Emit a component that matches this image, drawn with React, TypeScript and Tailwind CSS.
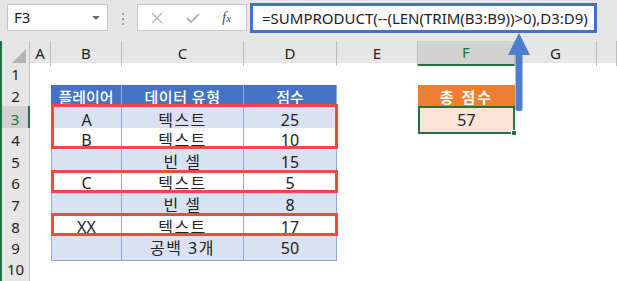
import React from "react";

const font = `"Segoe UI", "Noto Sans", "Noto Sans CJK KR", sans-serif`;

const cols = ["A", "B", "C", "D", "E", "F", "G", ""];
const rowHeights = [22, 21, 22, 22, 21, 22, 22, 21, 22, 22];

type Row = { b: string; c: string; d: string };
const data: Row[] = [
  { b: "A", c: "텍스트", d: "25" },
  { b: "B", c: "텍스트", d: "10" },
  { b: "", c: "빈 셀", d: "15" },
  { b: "C", c: "텍스트", d: "5" },
  { b: "", c: "빈 셀", d: "8" },
  { b: "XX", c: "텍스트", d: "17" },
  { b: "", c: "공백 3개", d: "50" },
];

function Toolbar() {
  return (
    <div className="flex h-[41px] items-start bg-[#e6e6e6] pt-[4px]">
      <div className="ml-[7px] flex h-[27px] w-[101px] items-center justify-between border border-[#c6c6c6] bg-white pl-[6px] pr-[7px] text-[15px] text-[#222]">
        <span>F3</span>
        <span className="h-0 w-0 border-x-[4px] border-t-[4px] border-x-transparent border-t-[#666]" />
      </div>
      <div className="ml-[14px] mt-[9px] flex flex-col gap-[3px]">
        <span className="size-[2px] bg-[#9a9a9a]" />
        <span className="size-[2px] bg-[#9a9a9a]" />
        <span className="size-[2px] bg-[#9a9a9a]" />
      </div>
      <div className="ml-[13px] flex h-[27px] w-[110px] items-center border border-[#c6c6c6] bg-white">
        <svg width="12" height="12" viewBox="0 0 12 12" className="ml-[13px]">
          <path d="M1 1 L11 11 M11 1 L1 11" stroke="#b5b5b5" strokeWidth="1.4" />
        </svg>
        <svg width="14" height="12" viewBox="0 0 14 12" className="ml-[23px]">
          <path d="M1 6 L5 10 L13 2" stroke="#b5b5b5" strokeWidth="2" fill="none" />
        </svg>
        <span className="ml-[22px] text-[15px] italic text-[#555]" style={{ fontFamily: '"Liberation Serif", serif' }}>
          f<span className="text-[11px]">x</span>
        </span>
      </div>
      <div className="ml-[3px] mt-[-1px] flex h-[30px] w-[347px] items-center overflow-hidden whitespace-nowrap border-[3px] border-[#4472c4] bg-white pl-[9px] text-[15px] text-[#222]">
        =SUMPRODUCT(--(LEN(TRIM(B3:B9))&gt;0),D3:D9)
      </div>
    </div>
  );
}

export default function App() {
  const grid =
    "grid grid-cols-[2px_28px_21px_71px_122px_93px_81px_97px_82px_1fr]";
  return (
    <div className="relative h-[281px] w-[617px] overflow-hidden bg-white" style={{ fontFamily: font }}>
      <Toolbar />
      {/* column header row */}
      <div className={`${grid} h-[22px] bg-[#e6e6e6] text-[15px] text-[#222]`}>
        <div className="bg-[#217346]" />
        <div className="relative border-r border-[#bdbdbd]">
          <span className="absolute bottom-[3px] right-[3px] h-0 w-0 border-b-[14px] border-l-[14px] border-l-transparent border-b-[#b4b4b4]" />
        </div>
        {cols.map((c) => (
          <div
            key={c || "h"}
            className={
              c === "F"
                ? "flex items-center justify-center border-b-2 border-r border-b-[#217346] border-r-[#bdbdbd] bg-[#d2d2d2] text-[#217346]"
                : "flex items-center justify-center border-r border-[#bdbdbd]"
            }
          >
            {c}
          </div>
        ))}
      </div>
      {/* sheet rows */}
      {rowHeights.map((h, i) => {
        const r = i + 1;
        const d = r >= 3 && r <= 9 ? data[r - 3] : null;
        const band = d ? (r % 2 === 1 ? "bg-[#d9e1f2]" : "bg-white") : "";
        const cell = `flex items-center justify-center text-[16px] text-[#222] ${band}`;
        return (
          <div key={r} className={grid} style={{ height: h }}>
            <div className="bg-[#217346]" />
            <div
              className={
                r === 3
                  ? "flex items-center justify-center border-b border-r-2 border-b-[#c8c8c8] border-r-[#217346] bg-[#d2d2d2] text-[15px] text-[#217346]"
                  : "flex items-center justify-center border-b border-r border-[#c8c8c8] bg-[#e6e6e6] text-[15px] text-[#222]"
              }
            >
              {r}
            </div>
            <div />
            {r === 2 ? (
              <>
                <div className="flex items-center justify-center border-r border-[#8ea9db] bg-[#4472c4] text-[15px] font-medium text-white">플레이어</div>
                <div className="flex items-center justify-center border-r border-[#8ea9db] bg-[#4472c4] text-[15px] font-medium tracking-[0.5px] text-white">데이터 유형</div>
                <div className="flex items-center justify-center border-r border-[#8ea9db] bg-[#4472c4] text-[15px] font-medium text-white">점수</div>
              </>
            ) : d ? (
              <>
                <div className={`${cell} border-b border-l border-r border-[#8ea9db]`}>{d.b}</div>
                <div className={`${cell} border-b border-r border-[#8ea9db] tracking-[1.5px]`}>{d.c}</div>
                <div className={`${cell} border-b border-r border-[#8ea9db]`}>{d.d}</div>
              </>
            ) : (
              <>
                <div />
                <div />
                <div />
              </>
            )}
            <div />
            {r === 2 ? (
              <div className="flex items-center justify-center bg-[#ed7d31] text-[15px] font-bold tracking-[2px] text-white">총 점수</div>
            ) : r === 3 ? (
              <div className="relative flex items-center justify-center border-2 border-[#217346] bg-[#fce4d6] text-[16px] text-[#222]">
                57
                <span className="absolute bottom-[-4px] right-[-4px] size-[6px] border border-white bg-[#217346]" />
              </div>
            ) : (
              <div />
            )}
            <div />
            <div />
          </div>
        );
      })}
      {/* red highlight boxes */}
      <div className="absolute left-[51px] top-[104px] h-[45px] w-[287px] border-[3px] border-[#ff4343]" />
      <div className="absolute left-[51px] top-[170px] h-[23px] w-[287px] border-[3px] border-[#ff4343]" />
      <div className="absolute left-[51px] top-[213px] h-[23px] w-[287px] border-[3px] border-[#ff4343]" />
      {/* arrow */}
      <svg className="absolute left-[506px] top-[32px]" width="26" height="80" viewBox="0 0 26 80">
        <path d="M13 1 L24 23 L16.5 23 L16.5 77 Q16.5 79 14.5 79 L11.5 79 Q9.5 79 9.5 77 L9.5 23 L2 23 Z" fill="#4f7dcc" />
      </svg>
    </div>
  );
}
